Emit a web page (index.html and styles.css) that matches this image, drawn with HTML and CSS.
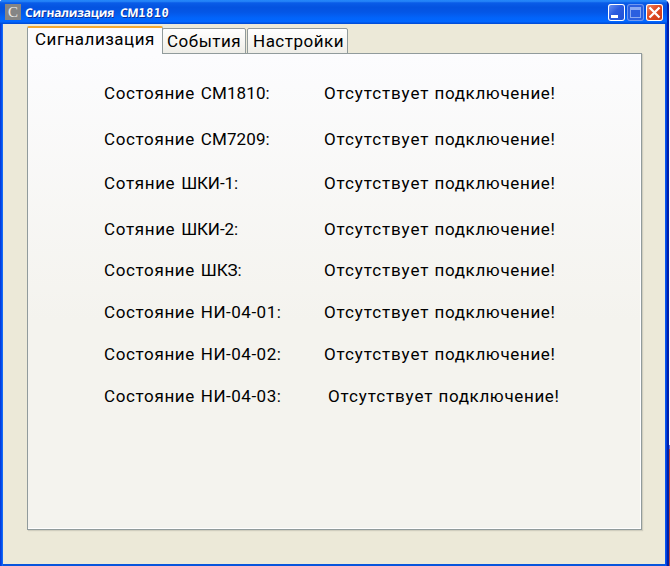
FILE: index.html
```html
<!DOCTYPE html>
<html lang="ru">
<head>
<meta charset="utf-8">
<title>Сигнализация СМ1810</title>
<link rel="stylesheet" href="styles.css">
</head>
<body>
<div class="window">
  <header class="titlebar">
    <span class="app-icon">C</span>
    <h1 class="title"><span class="title-name">Сигнализация</span><span class="title-model">СМ<span class="digits">1810</span></span></h1>
    <div class="controls">
      <span class="control minimize"><svg width="17" height="17" viewBox="0 0 17 17"><path d="M3 11h7v3H3z" fill="#fff"/></svg></span>
      <span class="control maximize"><svg width="17" height="17" viewBox="0 0 17 17"><path d="M3 3h11v11H3zM4 6v7h9V6z" fill="#89a9f2" fill-rule="evenodd"/></svg></span>
      <span class="control close"><svg width="17" height="17" viewBox="0 0 17 17"><path d="M3.5 3.5l10 10M13.500 3.500l-10 10" stroke="#fff" stroke-width="2.3"/></svg></span>
    </div>
  </header>
  <main class="client">
    <nav class="tabs">
      <span class="tab active">Сигнализация</span>
      <span class="tab events">События</span>
      <span class="tab settings">Настройки</span>
    </nav>
    <section class="pane">
      <div class="row"><span class="label">Состояние <span class="code">СМ1810:</span></span><span class="value">Отсутствует <span class="word">подключение!</span></span></div>
      <div class="row gap-26"><span class="label">Состояние <span class="code">СМ7209:</span></span><span class="value">Отсутствует <span class="word">подключение!</span></span></div>
      <div class="row gap-24"><span class="label">Сотяние <span class="code tight">ШКИ-1:</span></span><span class="value">Отсутствует <span class="word">подключение!</span></span></div>
      <div class="row gap-26"><span class="label">Сотяние <span class="code tight">ШКИ-2:</span></span><span class="value">Отсутствует <span class="word">подключение!</span></span></div>
      <div class="row gap-21"><span class="label">Состояние <span class="code tight">ШКЗ:</span></span><span class="value">Отсутствует <span class="word">подключение!</span></span></div>
      <div class="row gap-22"><span class="label">Состояние <span class="code wide">НИ-04-01:</span></span><span class="value">Отсутствует <span class="word">подключение!</span></span></div>
      <div class="row gap-22"><span class="label">Состояние <span class="code wide">НИ-04-02:</span></span><span class="value">Отсутствует <span class="word">подключение!</span></span></div>
      <div class="row gap-22"><span class="label">Состояние <span class="code wide">НИ-04-03:</span></span><span class="value shifted">Отсутствует <span class="word">подключение!</span></span></div>
    </section>
  </main>
</div>
</body>
</html>
```
FILE: styles.css
```css
* { box-sizing: border-box; }
body {
  margin: 0;
  width: 670px;
  height: 566px;
  overflow: hidden;
  background: linear-gradient(#fff 0 445px, #6a70d8 445px 449px, #b8483c 449px);
  font: 17px/20px Roboto, "Liberation Sans", sans-serif;
  color: #000;
}
.window {
  width: 669px;
  height: 566px;
  border-radius: 3px 5px 0 0;
  overflow: hidden;
  background: linear-gradient(90deg, #0a3cd8 0 1px, #0050f0 1px 2px, #1668f4 2px 3px, #0855dd 3px 665px, #0855f0 665px 666px, #0040e0 666px 667px, #0020a8 667px);
}
.titlebar {
  display: flex;
  align-items: center;
  height: 24px;
  margin-right: 2px;
  padding: 1px 3px 0 5px;
  background: linear-gradient(#1c7cf6 0, #2a8cfb 4%, #0a5ce8 12%, #0453e0 30%, #0456e6 50%, #0264fb 75%, #0066ff 90%, #0048d0 100%);
}
.app-icon {
  width: 16px;
  height: 16px;
  margin-top: -2px;
  background: #858585;
  color: #eee;
  font: 15px/16px "Liberation Serif", serif;
  text-align: center;
}
.title {
  display: flex;
  gap: 6px;
  margin: 0 auto 0 4px;
  color: #fff;
  font: 700 12px/16px "Open Sans", sans-serif;
  text-shadow: 1px 1px 0 #0a2f9c;
  white-space: nowrap;
  transform: skewX(-4deg);
}
.title-name { letter-spacing: -0.2px; }
.title-model { letter-spacing: -0.4px; }
.digits { font-family: "DejaVu Sans Mono", monospace; letter-spacing: 0.5px; }
.controls { display: flex; gap: 2px; margin-right: 1px; }
.control {
  width: 17px;
  height: 17px;
  border-radius: 3px;
  box-shadow: inset 0 0 0 1px #fff;
}
.control svg { display: block; }
.minimize { background: linear-gradient(135deg, #7199f3, #2b5be0 45%, #1f50d5); }
.maximize { background: #2b5fe0; box-shadow: inset 0 0 0 1px #6f98f0; }
.close { background: linear-gradient(135deg, #f09070, #e04a22 45%, #c83a18); }
.client {
  height: 540px;
  margin: 0 4px 0 3px;
  padding: 2px 23px 0 24px;
  background: #ece9d8;
}
.tabs { display: flex; height: 28px; align-items: flex-end; position: relative; }
.tab {
  height: 26px;
  padding: 2px 0 0 4px;
  border: 1px solid #919b9c;
  border-radius: 2px 2px 0 0;
  background: linear-gradient(#fff, #f6f5f1 60%, #eeede7);
  letter-spacing: 0.5px;
  white-space: nowrap;
}
.active {
  z-index: 1;
  width: 136px;
  height: 28px;
  padding: 1px 0 0 7px;
  border-top: 2px solid #f4a930;
  border-bottom: 0;
  background: #fcfcfe;
}
.events { width: 84px; margin-left: -1px; }
.settings { width: 101px; margin-left: 1px; padding-left: 5px; }
.pane {
  width: 615px;
  height: 477px;
  margin-top: -1px;
  padding: 29px 0 0 76px;
  border: 1px solid #919b9c;
  box-shadow: inset -1px -1px 0 #fff, 1px 1px 1px #d0cebf;
  background: linear-gradient(#fcfcfe, #f4f3ee 56%, #f4f3ee);
}
.row { display: flex; height: 20px; white-space: nowrap; }
.label { width: 220px; letter-spacing: 0.65px; word-spacing: 1px; }
.code { letter-spacing: 0.1px; }
.tight { letter-spacing: -0.1px; }
.wide { letter-spacing: 0.5px; }
.value { letter-spacing: 0.9px; }
.word { letter-spacing: 0.65px; }
.shifted { margin-left: 4px; }
.gap-21 { margin-top: 21px; }
.gap-22 { margin-top: 22px; }
.gap-24 { margin-top: 24px; }
.gap-26 { margin-top: 26px; }
```
